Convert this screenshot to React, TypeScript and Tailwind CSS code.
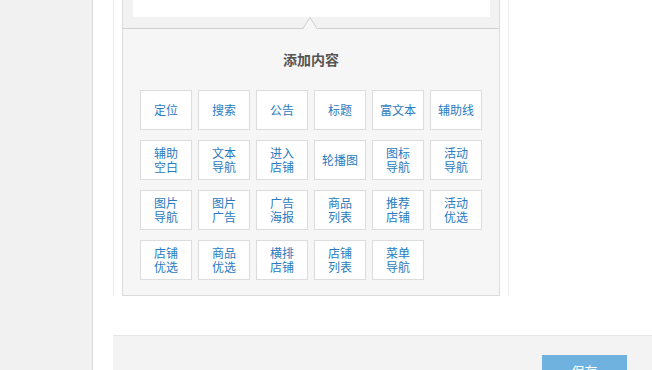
const items: string[][] = [
  ['定位'], ['搜索'], ['公告'], ['标题'], ['富文本'], ['辅助线'],
  ['辅助', '空白'], ['文本', '导航'], ['进入', '店铺'], ['轮播图'], ['图标', '导航'], ['活动', '导航'],
  ['图片', '导航'], ['图片', '广告'], ['广告', '海报'], ['商品', '列表'], ['推荐', '店铺'], ['活动', '优选'],
  ['店铺', '优选'], ['商品', '优选'], ['横排', '店铺'], ['店铺', '列表'], ['菜单', '导航'],
];

export default function App() {
  return (
    <div
      className="flex h-[370px] w-[652px] overflow-hidden bg-white"
      style={{ fontFamily: '"Noto Sans CJK SC", "Liberation Sans", sans-serif' }}
    >
      {/* 左侧栏 */}
      <div className="w-[93px] shrink-0 border-r border-[#dadada] bg-[#f1f1f1]" />

      <div className="flex flex-1 flex-col">
        <div className="pl-[20px]">
          <div className="h-[296px] w-[396px] border-x border-[#ececec] px-[8px]">
            <div className="relative border-x border-b border-[#dcdcdc]">
              {/* 预览区底部 */}
              <div className="h-[29px] border-b border-[#cfcfcf] bg-[#f2f2f2] pl-[10px] pr-[9px]">
                <div className="h-[17px] bg-white" />
              </div>
              {/* 小箭头 */}
              <svg className="absolute left-[180px] top-[17px]" width="14" height="13" viewBox="0 0 14 13">
                <polygon points="0,12 7,1 14,12" fill="#f6f6f6" />
                <polyline points="0,11.5 7,0.5 14,11.5" fill="none" stroke="#d0d0d0" strokeWidth="1" />
              </svg>

              <div className="bg-[#f6f6f6] pb-[15px] pl-[17px] pt-[22px]">
                <div className="mb-[23px] pr-[17px] text-center text-[14px] font-bold leading-[16px] text-[#555]">
                  添加内容
                </div>
                <div className="grid grid-cols-[repeat(6,52px)] gap-x-[6px] gap-y-[10px]">
                  {items.map((lines) => (
                    <div
                      key={lines.join('')}
                      className="flex h-[40px] flex-col items-center justify-center border border-[#dcdcdc] bg-white text-[12px] leading-[14px] text-[#2a7bc0]"
                    >
                      {lines.map((l) => (
                        <span key={l}>{l}</span>
                      ))}
                    </div>
                  ))}
                </div>
              </div>
            </div>
          </div>
        </div>

        {/* 底部操作栏 */}
        <div className="mt-[39px] ml-[20px] flex flex-1 justify-end border-t border-[#e6e6e6] bg-[#f3f3f3] pr-[25px] pt-[19px]">
          <div className="flex h-[32px] w-[85px] items-center justify-center bg-[#6fb2e0] text-[13px] text-white">
            保存
          </div>
        </div>
      </div>
    </div>
  );
}
